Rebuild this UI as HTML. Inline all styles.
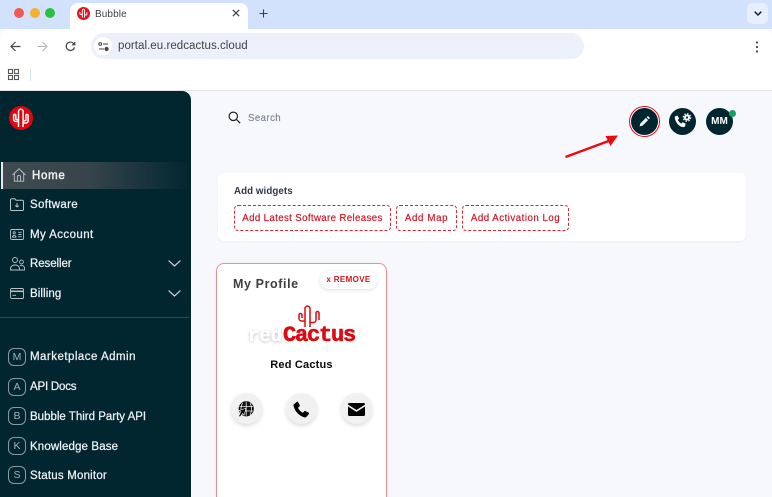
<!DOCTYPE html>
<html><head><meta charset="utf-8">
<style>
html,body{margin:0;padding:0;width:772px;height:497px;overflow:hidden;background:#fff;font-family:"Liberation Sans",sans-serif}
#r{position:relative;width:772px;height:497px;overflow:hidden;background:#f7f8fb}
.a,.t{position:absolute}
.t{white-space:nowrap;line-height:1}
.n{color:#eef1f2;font-size:11.5px;font-weight:400;letter-spacing:.42px;-webkit-text-stroke:.25px #eef1f2}
.b{position:absolute;top:205px;height:24px;border:1px dashed #d9232e;border-radius:4px;color:#d0121e;font-size:9.7px;line-height:25px;text-align:center;letter-spacing:.4px;background:#fff;-webkit-text-stroke:.15px #d0121e}
.c{position:absolute;left:8px;width:16px;height:16px;border:1px solid #8b9a9f;border-radius:6px;color:#a3b0b4;font-size:10.5px;line-height:17px;text-align:center}
.s{position:absolute;width:31px;height:31px;border-radius:50%;background:#f1f1f1;box-shadow:0 2px 4px rgba(0,0,0,.14)}
svg{position:absolute;overflow:visible}
</style></head><body><div id="r">
<!-- browser chrome -->
<div class="a" style="left:0;top:0;width:772px;height:29px;background:#d3e2fc"></div>
<div class="a" style="left:0;top:29px;width:772px;height:62px;background:#fff;border-radius:8px 8px 0 0"></div>
<div class="a" style="left:0;top:90px;width:772px;height:1px;background:#dfe1e5"></div>
<div class="a" style="left:14px;top:8px;width:10px;height:10px;border-radius:50%;background:#f05a52"></div>
<div class="a" style="left:30px;top:8px;width:10px;height:10px;border-radius:50%;background:#f4b02f"></div>
<div class="a" style="left:45px;top:8px;width:10px;height:10px;border-radius:50%;background:#2cc041"></div>
<div class="a" style="left:70px;top:3px;width:178px;height:27px;background:#fff;border-radius:8px 8px 0 0"></div>
<div class="a" style="left:77px;top:7px;width:13px;height:13px;border-radius:50%;background:#d81a20"></div>
<svg style="left:77px;top:7px" width="13" height="13" viewBox="0 0 13 13" fill="none" stroke="#fff" stroke-width=".9"><path d="M5.300 10.500V3.300a1.100 1.100 0 0 1 2.200 0v7.200M5.300 7.500H3.800a.9.9 0 0 1-.9-.9V5M7.500 8h1.500a.9.9 0 0 0 .9-.9V5.200"/></svg>
<div class="t" style="left:95px;top:9.500px;font-size:10px;color:#3c4043;letter-spacing:.1px">Bubble</div>
<svg style="left:232px;top:9px" width="8" height="8" viewBox="0 0 8 8" stroke="#3c4043" stroke-width="1.200"><path d="M.8.8l6.400 6.400M7.200.8L.8 7.200"/></svg>
<svg style="left:259px;top:9px" width="9" height="9" viewBox="0 0 9 9" stroke="#3c4043" stroke-width="1.100"><path d="M4.500.5v8M.5 4.500h8"/></svg>
<div class="a" style="left:747px;top:3px;width:21px;height:21px;border-radius:6px;background:#e8effc"></div>
<svg style="left:754px;top:11px" width="8" height="5" viewBox="0 0 8 5" fill="none" stroke="#1f1f1f" stroke-width="1.500"><path d="M.7.7L4 4l3.300-3.300"/></svg>
<svg style="left:10px;top:41px" width="11" height="11" viewBox="0 0 11 11" fill="none" stroke="#444746" stroke-width="1.200"><path d="M10.500 5.500H1M5.500 1L1 5.500 5.500 10"/></svg>
<svg style="left:37px;top:41px" width="11" height="11" viewBox="0 0 11 11" fill="none" stroke="#b4b6b8" stroke-width="1.100"><path d="M.5 5.500H10M5.500 1L10 5.500 5.500 10"/></svg>
<svg style="left:65px;top:41px" width="11" height="11" viewBox="0 0 11 11" fill="none" stroke="#444746" stroke-width="1.200"><path d="M9.500 6.300A4.200 4.200 0 1 1 8.400 2.300L9.800 3.700M9.800 1v2.800H7"/></svg>
<div class="a" style="left:91px;top:33px;width:493px;height:26px;border-radius:13px;background:#ebf0fa"></div>
<div class="a" style="left:94px;top:37px;width:18px;height:18px;border-radius:50%;background:#fff"></div>
<svg style="left:98px;top:42px" width="11" height="9" viewBox="0 0 11 9" fill="none" stroke="#444746"><circle cx="2.200" cy="2" r="1.400"/><path d="M5 2h5M1 7h5"/><circle cx="8.600" cy="7" r="1.600" fill="#444746"/></svg>
<div class="t" style="left:118px;top:41px;font-size:11.500px;color:#3f4245;letter-spacing:.05px">portal.eu.redcactus.cloud</div>
<svg style="left:755px;top:41px" width="4" height="12" viewBox="0 0 4 12" fill="#444746"><circle cx="2" cy="1.500" r="1.100"/><circle cx="2" cy="6" r="1.100"/><circle cx="2" cy="10.500" r="1.100"/></svg>
<svg style="left:8px;top:69px" width="11" height="11" viewBox="0 0 11 11" fill="none" stroke="#555" stroke-width="1.100"><rect x=".5" y=".5" width="4" height="4"/><rect x="6.500" y=".5" width="4" height="4"/><rect x=".5" y="6.500" width="4" height="4"/><rect x="6.500" y="6.500" width="4" height="4"/></svg>
<div class="a" style="left:30px;top:69px;width:1px;height:12px;background:#d3e2fc"></div>

<!-- sidebar -->
<div class="a" style="left:0;top:91px;width:191px;height:406px;background:#022630;border-radius:0 9px 0 0"></div>
<div class="a" style="left:9px;top:106px;width:24px;height:24px;border-radius:50%;background:#e0060f"></div>
<svg style="left:9px;top:106px" width="24" height="24" viewBox="0 0 24 24" fill="none" stroke="#fff" stroke-width="1.500"><path d="M9.500 21V5.500a2.300 2.300 0 0 1 4.600 0V21M9.500 15.500H6.800A2.200 2.200 0 0 1 4.600 13.300V9.500a1.100 1.100 0 0 1 2.200 0v3.400a.7.700 0 0 0 .7.700h2M14.100 17h2.800a2.200 2.200 0 0 0 2.200-2.200V9.500a1.100 1.100 0 0 0-2.200 0v4.400a.7.700 0 0 1-.7.7h-2.100"/></svg>
<div class="a" style="left:1px;top:162px;width:189px;height:27px;background:linear-gradient(90deg,#3e4b51 0%,#37454b 45%,#022630 100%)"></div>
<div class="a" style="left:1px;top:162px;width:2px;height:27px;background:#e6e9ea"></div>
<svg style="left:12px;top:168px" width="14" height="14" viewBox="0 0 14 14" fill="none" stroke="#b9c3c6" stroke-width=".9"><path d="M.5 7L7 .8 13.500 7M2.300 5.600v7.600h9.400V5.600M5.400 13.200V9a1.600 1.600 0 0 1 3.200 0v4.200"/></svg>
<div class="t n" style="left:32px;top:170.500px;letter-spacing:.7px;font-size:11.500px;-webkit-text-stroke:.45px #eef1f2">Home</div>
<svg style="left:10px;top:198px" width="14" height="13" viewBox="0 0 14 13" fill="none" stroke="#b9c3c6"><path d="M.5 2a1.300 1.300 0 0 1 1.300-1.300h3L6 2.200h6.200A1.300 1.300 0 0 1 13.500 3.500v7.700a1.300 1.300 0 0 1-1.300 1.300H1.800A1.300 1.300 0 0 1 .5 11.200z"/><path d="M7 5v3.700M5.300 7.500L7 9l1.700-1.500"/></svg>
<div class="t n" style="left:30px;top:199.500px;letter-spacing:.32px">Software</div>
<svg style="left:10px;top:229px" width="14" height="11" viewBox="0 0 14 11" fill="none" stroke="#b9c3c6" stroke-width=".9"><rect x=".5" y=".5" width="13" height="10" rx="1.300"/><circle cx="4.200" cy="3.800" r="1.100"/><path d="M2.400 8.200c0-2.400 3.600-2.400 3.600 0zM8.200 3.300h3.400M8.200 5.500h3.400M8.200 7.700h3.400"/></svg>
<div class="t n" style="left:30px;top:229.500px">My Account</div>
<svg style="left:10px;top:257px" width="15" height="14" viewBox="0 0 15 14" fill="none" stroke="#b9c3c6" stroke-width=".9"><circle cx="5" cy="3" r="2.500"/><circle cx="11.500" cy="5" r="1.900"/><path d="M.5 13v-1.500C.5 9.500 2.500 8 5 8s4.500 1.500 4.500 3.500V13zM10 8.500c2.500-.5 4.500.6 4.500 2.700V13H9.700"/></svg>
<div class="t n" style="left:30px;top:258.500px;letter-spacing:-.08px">Reseller</div>
<svg style="left:168px;top:260px" width="13" height="7" viewBox="0 0 13 7" fill="none" stroke="#c6ced1" stroke-width="1.200"><path d="M.6.6L6.500 6 12.400.6"/></svg>
<svg style="left:10px;top:288px" width="14" height="11" viewBox="0 0 14 11" fill="none" stroke="#b9c3c6" stroke-width=".9"><rect x=".5" y=".5" width="13" height="10" rx="1.300"/><path d="M.5 3.300h13" stroke-width="1.500"/><path d="M2.500 7.300h3.500"/></svg>
<div class="t n" style="left:30px;top:288.500px;letter-spacing:.1px">Billing</div>
<svg style="left:168px;top:290px" width="13" height="7" viewBox="0 0 13 7" fill="none" stroke="#c6ced1" stroke-width="1.200"><path d="M.6.6L6.500 6 12.400.6"/></svg>
<div class="a" style="left:0;top:317px;width:189px;height:1px;background:#33494f"></div>
<div class="c" style="top:348px">M</div><div class="t n" style="left:30px;top:352px;letter-spacing:.48px">Marketplace Admin</div>
<div class="c" style="top:378px">A</div><div class="t n" style="left:30px;top:382px;letter-spacing:-.2px">API Docs</div>
<div class="c" style="top:407px">B</div><div class="t n" style="left:30px;top:411.500px;letter-spacing:0">Bubble Third Party API</div>
<div class="c" style="top:437px">K</div><div class="t n" style="left:30px;top:441.500px;letter-spacing:.13px">Knowledge Base</div>
<div class="c" style="top:466px">S</div><div class="t n" style="left:30px;top:470.500px;letter-spacing:.2px">Status Monitor</div>

<!-- top bar -->
<svg style="left:228px;top:111px" width="13" height="13" viewBox="0 0 13 13" fill="none" stroke="#222" stroke-width="1.200"><circle cx="5.300" cy="5.300" r="4.200"/><path d="M8.400 8.400l3.800 3.800"/></svg>
<div class="t" style="left:248px;top:113.500px;font-size:9.700px;color:#7f8495;letter-spacing:.4px;-webkit-text-stroke:.15px #7f8495">Search</div>
<div class="a" style="left:629px;top:106px;width:31px;height:31px;border-radius:50%;background:#fff;border:1.300px solid #e0101a;box-sizing:border-box"></div>
<div class="a" style="left:631px;top:108px;width:27px;height:27px;border-radius:50%;background:#022630"></div>
<svg style="left:639px;top:116px" width="11" height="11" viewBox="0 0 11 11" fill="#f2f4f4"><path d="M.6 10.400l.7-2.900 5.600-5.600 2.200 2.200-5.600 5.600zM7.600 1.200l.8-.7a.8.800 0 0 1 1.100 0l1 1a.8.800 0 0 1 0 1.100l-.7.8z"/></svg>
<div class="a" style="left:669px;top:108px;width:27px;height:27px;border-radius:50%;background:#022630"></div>
<svg style="left:674px;top:113px" width="18" height="17" viewBox="0 0 18 17" fill="#fff"><path d="M1.300 3.200L3.600 2.600l1.500 3-1.400 1.100c.7 1.700 2 3 3.800 3.900l1.100-1.500 3 1.500-.5 2.400c-.2.800-1.200 1.200-2 1.100C4.800 13.600 1.500 9.500.8 4.900c-.1-.7.100-1.400.5-1.700z"/><circle cx="13" cy="4.500" r="3"/><circle cx="13" cy="4.500" r="3.700" fill="none" stroke="#fff" stroke-width="1.300" stroke-dasharray="1.500 1.400"/><circle cx="13" cy="4.500" r="1.100" fill="#022630"/></svg>
<div class="a" style="left:706px;top:108px;width:27px;height:27px;border-radius:50%;background:#022630;color:#fff;font-size:10px;font-weight:700;line-height:28px;text-align:center">MM</div>
<div class="a" style="left:729px;top:110px;width:7px;height:7px;border-radius:50%;background:#12a267"></div>
<svg style="left:564px;top:132px" width="58" height="27" viewBox="0 0 58 27"><path d="M1.500 25L46 8.500" stroke="#ea0b12" stroke-width="2.300"/><path d="M54 3.500L41.500 4 46.500 14z" fill="#ea0b12"/></svg>

<!-- widgets -->
<div class="a" style="left:218px;top:173px;width:528px;height:68px;background:#fff;border-radius:6px;box-shadow:0 1px 2px rgba(30,40,60,.05)"></div>
<div class="t" style="left:234px;top:186.500px;font-size:9.700px;font-weight:700;color:#2f3848;letter-spacing:.1px">Add widgets</div>
<div class="b" style="left:234px;width:155px;letter-spacing:.36px">Add Latest Software Releases</div>
<div class="b" style="left:396px;width:59px;letter-spacing:.65px">Add Map</div>
<div class="b" style="left:462px;width:105px;letter-spacing:.5px">Add Activation Log</div>

<!-- card -->
<div class="a" style="left:216px;top:263px;width:171px;height:234px;background:#fff;border:1px solid #ee8f94;border-bottom:0;border-radius:8px 8px 0 0;box-sizing:border-box;box-shadow:0 0 3px rgba(0,0,0,.05)"></div>
<div class="t" style="left:233px;top:277.500px;font-size:12.500px;font-weight:700;color:#3f3f3f;letter-spacing:.6px">My Profile</div>
<div class="a" style="left:320px;top:271px;width:57px;height:18px;border-radius:9px;background:#fff;box-shadow:0 1px 4px rgba(0,0,0,.13);color:#d8131c;font-size:8px;font-weight:700;line-height:18px;text-align:center;letter-spacing:.35px">x REMOVE</div>
<div class="t" style="left:248px;top:327px;font:700 19px/1 'Liberation Mono',monospace;color:#fff;text-shadow:0 1px 3px rgba(0,0,0,.3);letter-spacing:0;-webkit-text-stroke:.4px #fff">red</div>
<div class="t" style="left:283px;top:325px;font:700 22px/1 'Liberation Mono',monospace;color:#dd0a12;letter-spacing:-1.200px;-webkit-text-stroke:.6px #dd0a12">Cactus</div>
<svg style="left:296px;top:305px" width="24" height="24" viewBox="0 0 24 24" fill="none" stroke="#dd0a12" stroke-width="1.500"><path d="M9 22V3.500a2.500 2.500 0 0 1 5 0V22M9 16H5.500A2.500 2.500 0 0 1 3 13.500V10a1.500 1.500 0 0 1 3 0v3M14 17.500h3.500a2.500 2.500 0 0 0 2.500-2.500V8a1.500 1.500 0 0 1 3 0v7"/></svg>
<div class="t" style="left:217px;top:359.500px;width:169px;text-align:center;font-size:11px;font-weight:700;color:#0a0a0a;letter-spacing:.2px">Red Cactus</div>
<div class="s" style="left:231px;top:393px"></div>
<div class="s" style="left:286px;top:393px"></div>
<div class="s" style="left:341px;top:393px"></div>
<svg style="left:238px;top:401px" width="16" height="16" viewBox="0 0 16 16" fill="none" stroke="#000" stroke-width="1.100"><circle cx="8.200" cy="7.800" r="7" fill="#111"/><path d="M1.500 5.500h13.500M1.500 10h13.500M8.200 .8v14M4.500 2c-2 3.500-2 8 0 12M12 2c2 3.500 2 8 0 12" stroke="#f1f1f1" stroke-width=".8"/><path d="M.5 15.500L3 10.500 1 9.500l7-2.200-2 7-1.200-2-2.500 3.200z" fill="#000" stroke="#f1f1f1" stroke-width=".6"/></svg>
<svg style="left:293px;top:401px" width="17" height="17" viewBox="0 0 17 17" fill="#000"><path d="M1 3.300L3.900.8c.4-.3.900-.2 1.100.2l1.800 3.300c.2.400.1.800-.2 1.100L5 6.800c.8 2 2.700 4 4.900 5l1.400-1.600c.3-.3.700-.4 1.100-.2l3.300 1.800c.4.200.5.800.2 1.200L13.300 16c-.5.400-1.100.6-1.700.4C6.300 15 2 10.600.6 5 .4 4.400.6 3.700 1 3.300z"/></svg>
<svg style="left:348px;top:403px" width="17" height="13" viewBox="0 0 17 13" fill="#000"><path d="M1.200 0h14.600c.6 0 1.200.5 1.200 1.200v.4L8.500 7 0 1.600v-.4C0 .5.600 0 1.200 0zM0 3.500l8.500 5.400L17 3.500v8.300c0 .7-.6 1.200-1.200 1.200H1.200C.6 13 0 12.500 0 11.800z"/></svg>
</div></body></html>
